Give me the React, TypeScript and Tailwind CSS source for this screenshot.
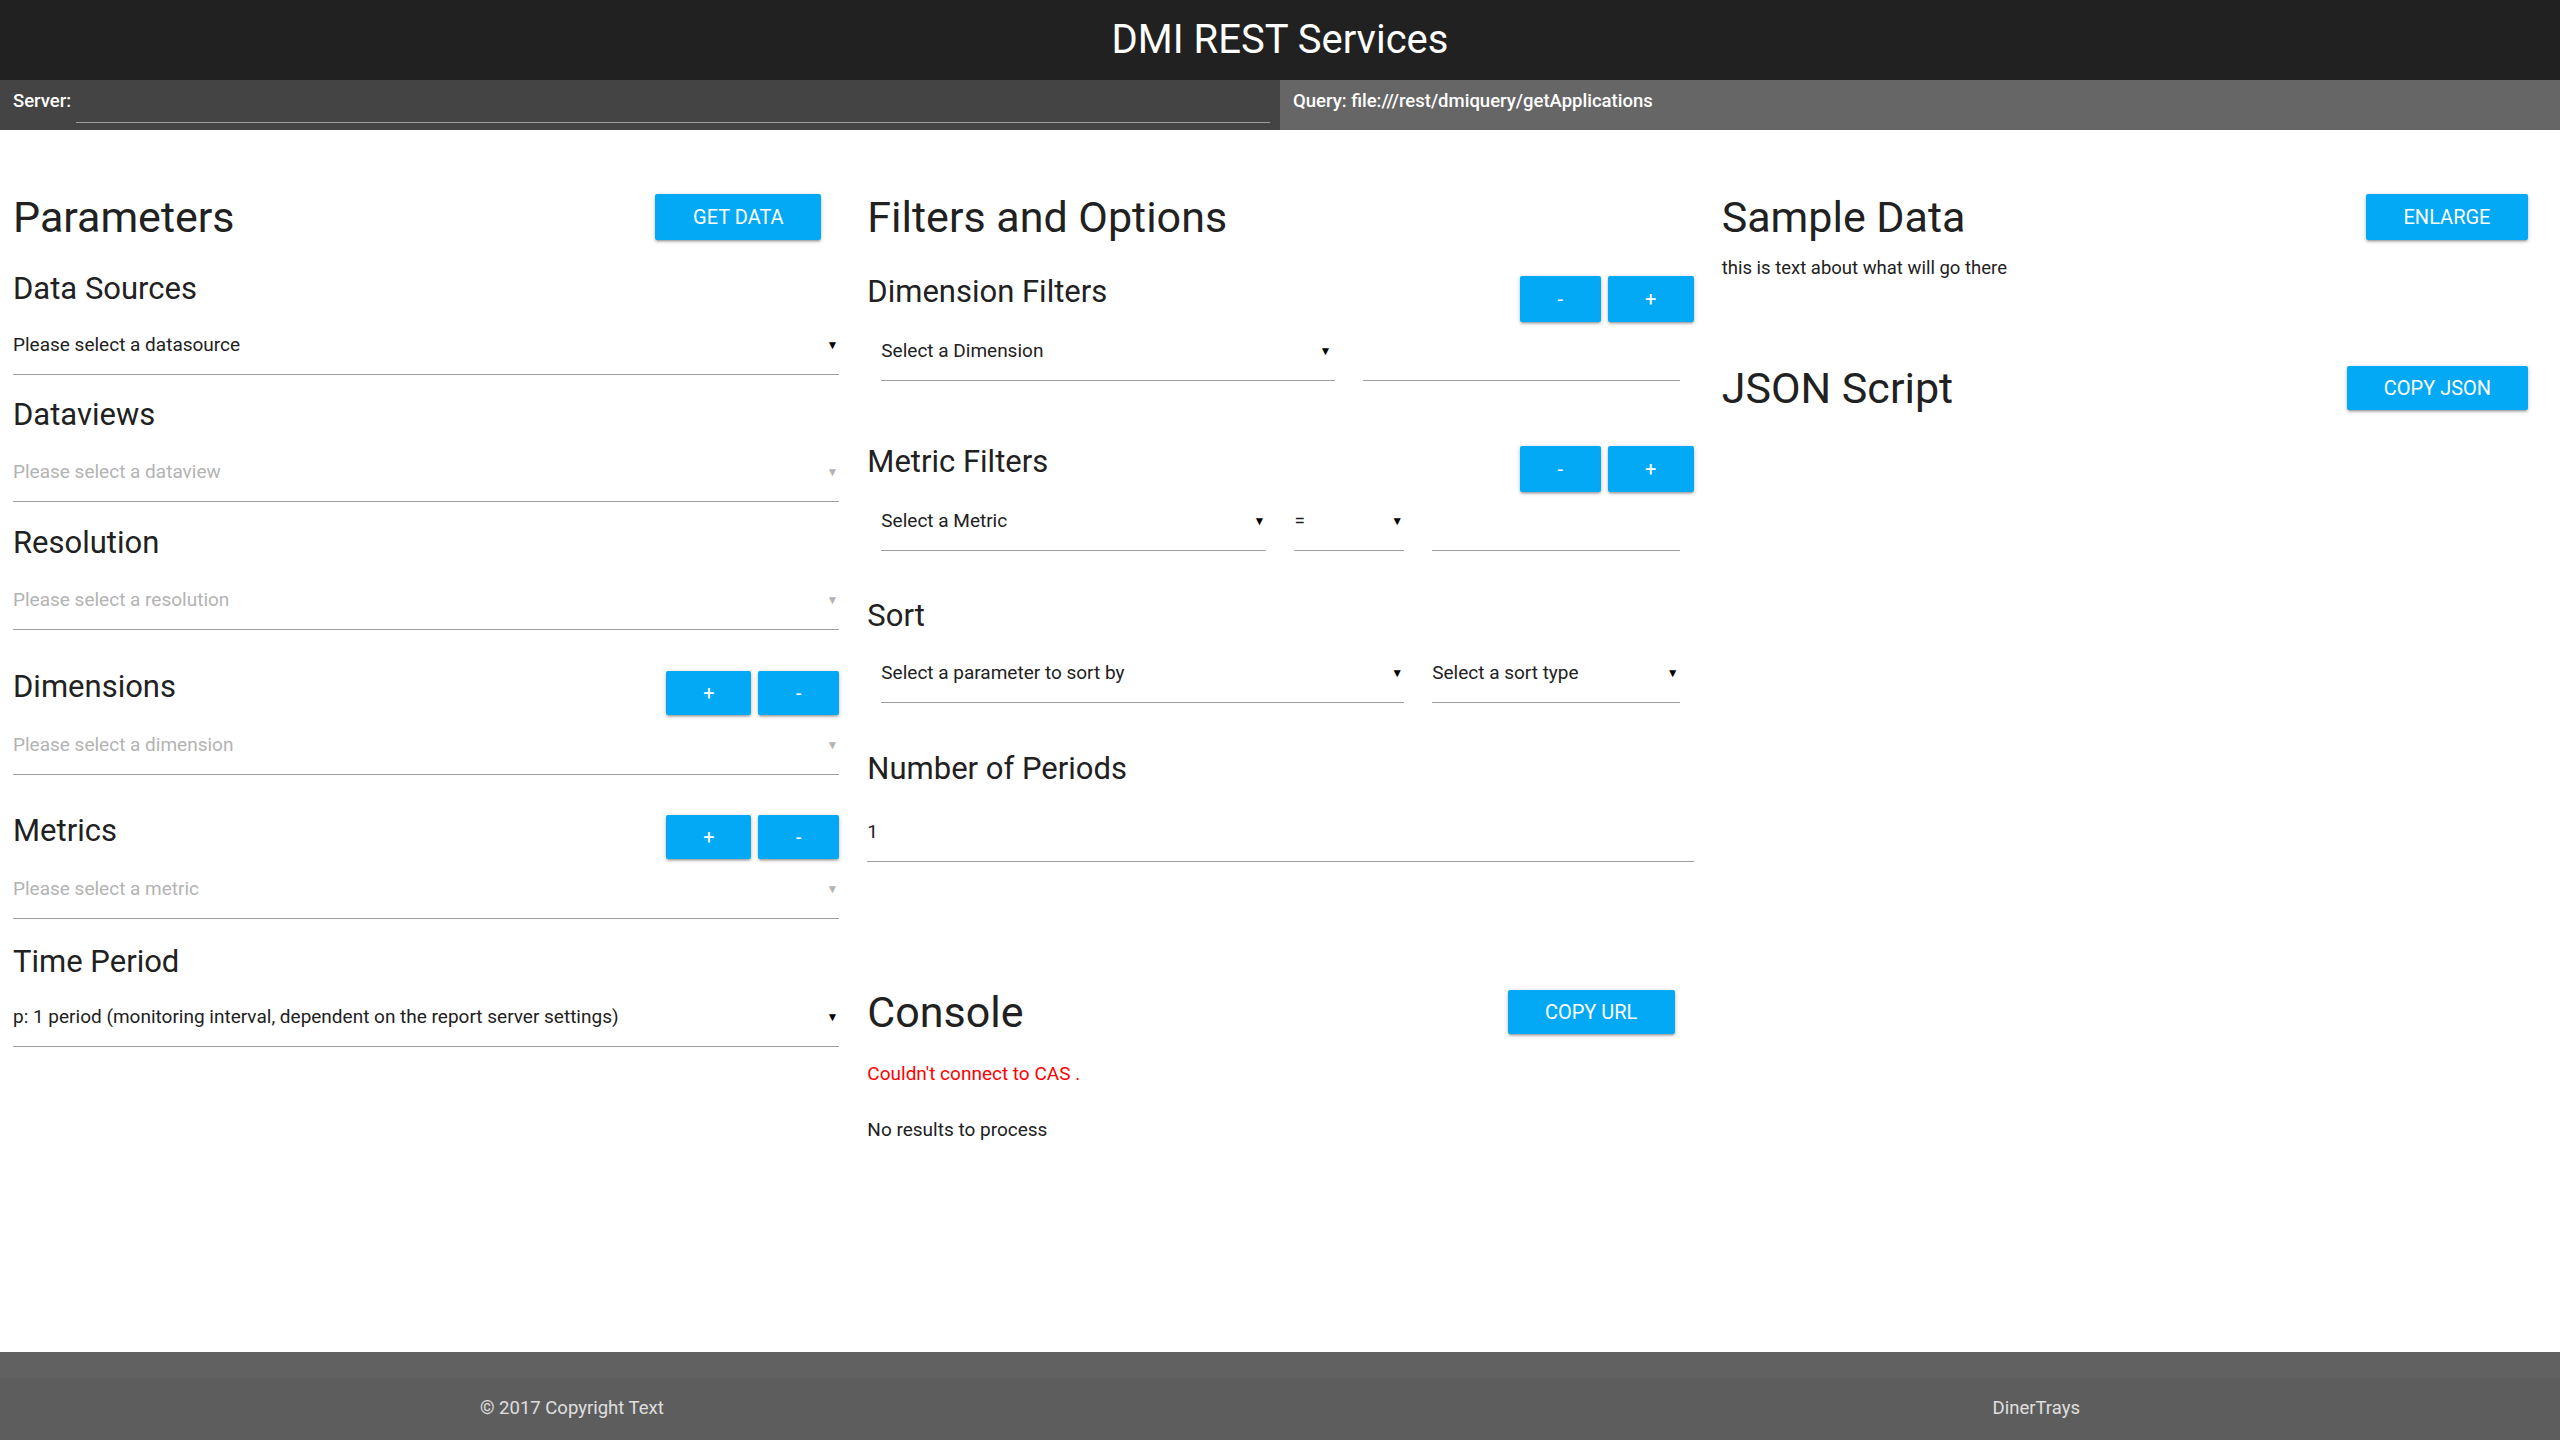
type SelectProps = { label: string; muted?: boolean; className?: string };

const Select = ({ label, muted, className = "" }: SelectProps) => (
  <div className={`flex h-[59px] items-center justify-between border-b border-[#9e9e9e] pr-[1px] ${className}`}>
    <span className={muted ? "text-[19px] text-[#b3b3b3]" : "text-[19px] text-[#212121]"}>{label}</span>
    <span className={muted ? "text-[12px] leading-none text-[#b3b3b3]" : "text-[12px] leading-none text-black"}>▼</span>
  </div>
);

const Field = ({ className = "" }: { className?: string }) => (
  <div className={`h-[59px] border-b border-[#9e9e9e] ${className}`} />
);

const Btn = ({ children, className = "" }: { children: React.ReactNode; className?: string }) => (
  <button
    className={`flex items-center justify-center rounded-[2px] bg-[#03a9f4] text-[20px] font-normal uppercase text-white shadow-[0_2px_2px_0_rgba(0,0,0,0.14),0_3px_1px_-2px_rgba(0,0,0,0.12),0_1px_5px_0_rgba(0,0,0,0.2)] ${className}`}
  >
    {children}
  </button>
);

const Title = ({ children }: { children: React.ReactNode }) => (
  <h2 className="text-[43px] font-normal leading-[46px] text-[#212121]">{children}</h2>
);

const Sub = ({ children, className = "" }: { children: React.ReactNode; className?: string }) => (
  <h3 className={`text-[31px] font-normal leading-[36px] text-[#212121] ${className}`}>{children}</h3>
);

export default function App() {
  return (
    <div className="flex min-h-screen flex-col bg-white font-[family-name:Roboto,sans-serif] text-[#212121]">
      <header className="flex h-[80px] items-center justify-center bg-[#212121]">
        <h1 className="text-[40px] font-normal text-white">DMI REST Services</h1>
      </header>

      <div className="flex h-[50px] text-[18.5px] font-medium text-white">
        <div className="flex w-1/2 items-start bg-[#444444]">
          <span className="ml-[13px] mt-[9px] leading-[24px]">Server:</span>
          <div className="ml-[5px] mr-[10px] h-[43px] flex-1 border-b border-[#9e9e9e]" />
        </div>
        <div className="w-1/2 bg-[#666666] pl-[13px] pt-[9px] leading-[24px]">
          Query: file:///rest/dmiquery/getApplications
        </div>
      </div>

      <main className="grid flex-1 grid-cols-3">
        {/* Parameters */}
        <section className="pl-[13px] pr-[14px] pt-[64px]">
          <div className="flex h-[46px] items-center justify-between">
            <Title>Parameters</Title>
            <Btn className="mr-[18px] h-[46px] w-[166px]">Get Data</Btn>
          </div>

          <Sub className="mt-[31px]">Data Sources</Sub>
          <Select label="Please select a datasource" className="mt-[9px]" />

          <Sub className="mt-[22px]">Dataviews</Sub>
          <Select label="Please select a dataview" muted className="mt-[10px]" />

          <Sub className="mt-[23px]">Resolution</Sub>
          <Select label="Please select a resolution" muted className="mt-[10px]" />

          <div className="mt-[35px] flex items-start justify-between">
            <Sub className="leading-[44px]">Dimensions</Sub>
            <div className="mt-[6px] flex gap-[7px]">
              <Btn className="h-[44px] w-[85px]">+</Btn>
              <Btn className="h-[44px] w-[81px]">-</Btn>
            </div>
          </div>
          <Select label="Please select a dimension" muted className="mt-[1px]" />

          <div className="mt-[34px] flex items-start justify-between">
            <Sub className="leading-[44px]">Metrics</Sub>
            <div className="mt-[6px] flex gap-[7px]">
              <Btn className="h-[44px] w-[85px]">+</Btn>
              <Btn className="h-[44px] w-[81px]">-</Btn>
            </div>
          </div>
          <Select label="Please select a metric" muted className="mt-[1px]" />

          <Sub className="mt-[25px]">Time Period</Sub>
          <Select
            label="p: 1 period (monitoring interval, dependent on the report server settings)"
            className="mt-[8px]"
          />
        </section>

        {/* Filters and Options */}
        <section className="pl-[14px] pr-[13px] pt-[64px]">
          <div className="flex h-[46px] items-center">
            <Title>Filters and Options</Title>
          </div>

          <div className="mt-[34px] flex items-start justify-between">
            <Sub>Dimension Filters</Sub>
            <div className="mt-[2px] flex gap-[7px]">
              <Btn className="h-[46px] w-[81px]">-</Btn>
              <Btn className="h-[46px] w-[86px]">+</Btn>
            </div>
          </div>
          <div className="grid grid-cols-12">
            <div className="col-span-7 px-[14px]">
              <Select label="Select a Dimension" className="pr-[4px]" />
            </div>
            <div className="col-span-5 px-[14px]">
              <Field />
            </div>
          </div>

          <div className="mt-[63px] flex items-start justify-between">
            <Sub>Metric Filters</Sub>
            <div className="mt-[2px] flex gap-[7px]">
              <Btn className="h-[46px] w-[81px]">-</Btn>
              <Btn className="h-[46px] w-[86px]">+</Btn>
            </div>
          </div>
          <div className="grid grid-cols-12">
            <div className="col-span-6 px-[14px]">
              <Select label="Select a Metric" />
            </div>
            <div className="col-span-2 px-[14px]">
              <Select label="=" />
            </div>
            <div className="col-span-4 px-[14px]">
              <Field />
            </div>
          </div>

          <Sub className="mt-[47px]">Sort</Sub>
          <div className="mt-[10px] grid grid-cols-12">
            <div className="col-span-8 px-[14px]">
              <Select label="Select a parameter to sort by" />
            </div>
            <div className="col-span-4 px-[14px]">
              <Select label="Select a sort type" />
            </div>
          </div>

          <Sub className="mt-[48px]">Number of Periods</Sub>
          <div className="mt-[16px] flex h-[59px] items-center border-b border-[#9e9e9e] text-[19px]">1</div>

          <div className="mt-[128px] flex h-[44px] items-center justify-between">
            <h2 className="text-[43px] font-normal leading-[44px] text-[#212121]">Console</h2>
            <Btn className="mr-[19px] h-[44px] w-[167px]">Copy URL</Btn>
          </div>
          <p className="mt-[28px] text-[19px] leading-[24px] text-[#ff0000]">Couldn't connect to CAS .</p>
          <p className="mt-[32px] text-[19px] leading-[24px]">No results to process</p>
        </section>

        {/* Sample Data */}
        <section className="pl-[15px] pr-[32px] pt-[64px]">
          <div className="flex h-[46px] items-center justify-between">
            <Title>Sample Data</Title>
            <Btn className="h-[46px] w-[162px]">Enlarge</Btn>
          </div>
          <p className="mt-[17px] text-[18.5px] leading-[22px]">this is text about what will go there</p>

          <div className="mt-[87px] flex h-[44px] items-center justify-between">
            <h2 className="text-[43px] font-normal leading-[44px] text-[#212121]">JSON Script</h2>
            <Btn className="h-[44px] w-[181px]">Copy JSON</Btn>
          </div>
        </section>
      </main>

      <footer className="bg-[#616161] pt-[26px]">
        <div className="flex h-[62px] items-center bg-[rgba(51,51,51,0.08)]">
          <div className="mx-auto flex w-[1600px] justify-between text-[18.5px] text-white/80">
            <span>© 2017 Copyright Text</span>
            <span>DinerTrays</span>
          </div>
        </div>
      </footer>
    </div>
  );
}
